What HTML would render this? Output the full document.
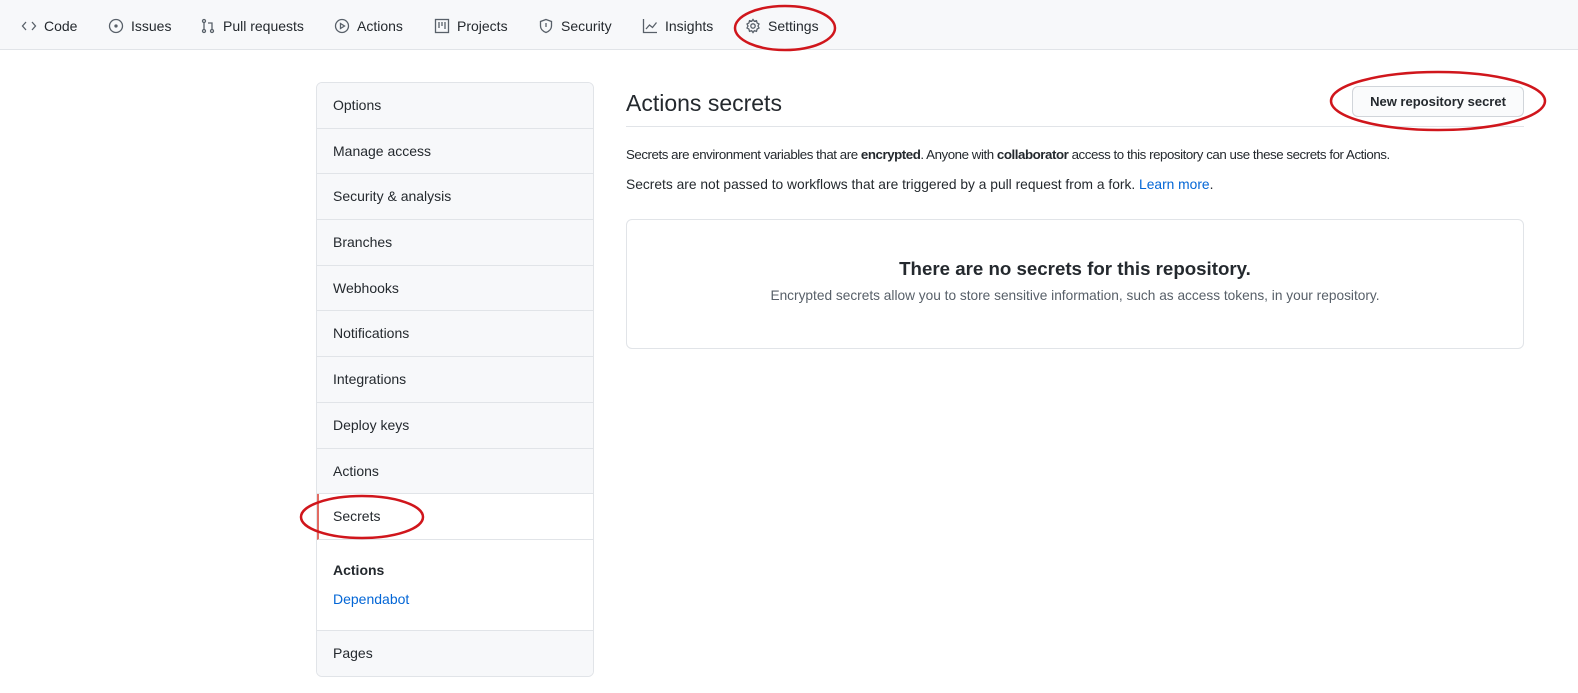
<!DOCTYPE html>
<html><head><meta charset="utf-8"><style>
*{box-sizing:border-box;margin:0;padding:0}
body{width:1578px;height:693px;background:#fff;font-family:"Liberation Sans",sans-serif;color:#24292e;position:relative;overflow:hidden;font-size:14px}
.nav{position:absolute;left:0;top:0;width:1578px;height:50px;background:#f7f8fa;border-bottom:1px solid #e1e4e8}
.nav span{position:absolute;top:18px;font-size:14px;color:#24292e;display:flex;align-items:center}
.nav svg{margin-right:7px}
.side{position:absolute;left:316px;top:82px;width:278px;height:595px;border:1px solid #e1e4e8;border-radius:6px;overflow:hidden;background:#fff}
.it{height:45.7px;line-height:45px;padding-left:16px;background:#f7f8fa;border-bottom:1px solid #e1e4e8;font-size:14px}
.it.sel{background:#fff;border-left:2px solid #e36b62;padding-left:14px}
.sub{height:91px;background:#fff;border-bottom:1px solid #e1e4e8;padding:22px 16px 0}
h2{position:absolute;left:626px;top:90px;font-size:23px;font-weight:normal}
.hr{position:absolute;left:626px;top:126px;width:898px;height:1px;background:#e1e4e8}
.btn{position:absolute;left:1352px;top:86px;width:172px;height:31px;border:1px solid #d1d5da;border-radius:6px;background:#fafbfc;font-size:13px;font-weight:bold;text-align:center;line-height:29px}
p{position:absolute;left:626px;font-size:13.4px}
.box{position:absolute;left:626px;top:219px;width:898px;height:130px;border:1px solid #e1e4e8;border-radius:6px;text-align:center}
</style></head><body>
<div class="nav">
<span style="left:21px"><svg width="16" height="16" viewBox="0 0 16 16" fill="none" stroke="#586069" stroke-width="1.3"><path d="M5 4L1.5 8 5 12M11 4l3.5 4-3.5 4"/></svg>Code</span>
<span style="left:108px"><svg width="16" height="16" viewBox="0 0 16 16" fill="none" stroke="#586069" stroke-width="1.3"><circle cx="8" cy="8" r="6.5"/><circle cx="8" cy="8" r="1" fill="#586069"/></svg>Issues</span>
<span style="left:200px"><svg width="16" height="16" viewBox="0 0 16 16" fill="none" stroke="#586069" stroke-width="1.3"><circle cx="4" cy="3" r="1.5"/><circle cx="4" cy="13" r="1.5"/><circle cx="12" cy="13" r="1.5"/><path d="M4 4.5v7M12 11.5V5H8"/></svg>Pull requests</span>
<span style="left:334px"><svg width="16" height="16" viewBox="0 0 16 16" fill="none" stroke="#586069" stroke-width="1.3"><circle cx="8" cy="8" r="6.5"/><path d="M6.5 5.5v5l4-2.5z"/></svg>Actions</span>
<span style="left:434px"><svg width="16" height="16" viewBox="0 0 16 16" fill="none" stroke="#586069" stroke-width="1.3"><rect x="1.5" y="1.5" width="13" height="13"/><path d="M5 4v6M8 4v4M11 4v7"/></svg>Projects</span>
<span style="left:538px"><svg width="16" height="16" viewBox="0 0 16 16" fill="none" stroke="#586069" stroke-width="1.3"><path d="M8 1.5l5.5 2v4.5c0 3.5-3 5.5-5.5 6.5C5.5 13.5 2.5 11.5 2.5 8V3.5z"/><path d="M8 5v4"/></svg>Security</span>
<span style="left:642px"><svg width="16" height="16" viewBox="0 0 16 16" fill="none" stroke="#586069" stroke-width="1.3"><path d="M1.5 1v13.5H15M4 11l3.5-4 3 2.5 4-5"/></svg>Insights</span>
<span style="left:745px"><svg width="16" height="16" viewBox="0 0 16 16" fill="none" stroke="#586069" stroke-width="1.3"><circle cx="8" cy="8" r="2.2"/><path d="M8 1.5l1.3 1.8 2.2-.6.6 2.2 1.9 1.1-1 2 1 2-1.9 1.1-.6 2.2-2.2-.6L8 14.5l-1.3-1.8-2.2.6-.6-2.2-1.9-1.1 1-2-1-2 1.9-1.1.6-2.2 2.2.6z"/></svg>Settings</span>
</div>
<div class="side">
<div class="it">Options</div><div class="it">Manage access</div><div class="it">Security &amp; analysis</div><div class="it">Branches</div><div class="it">Webhooks</div><div class="it">Notifications</div><div class="it">Integrations</div><div class="it">Deploy keys</div><div class="it">Actions</div>
<div class="it sel">Secrets</div>
<div class="sub"><div style="font-weight:bold;margin-bottom:13px">Actions</div><div style="color:#0366d6">Dependabot</div></div>
<div class="it" style="border-bottom:none">Pages</div>
</div>
<h2>Actions secrets</h2>
<div class="hr"></div>
<div class="btn">New repository secret</div>
<p style="top:147px;font-size:13.3px;letter-spacing:-0.45px">Secrets are environment variables that are <b>encrypted</b>. Anyone with <b>collaborator</b> access to this repository can use these secrets for Actions.</p>
<p style="top:177px;font-size:13.8px">Secrets are not passed to workflows that are triggered by a pull request from a fork. <span style="color:#0366d6">Learn more</span>.</p>
<div class="box"><div style="font-size:18.7px;font-weight:bold;margin-top:38px">There are no secrets for this repository.</div><div style="font-size:13.7px;color:#586069;margin-top:8px">Encrypted secrets allow you to store sensitive information, such as access tokens, in your repository.</div></div>
<svg style="position:absolute;left:0;top:0" width="1578" height="693"><g fill="none" stroke="#d0161c" stroke-width="2.5"><ellipse cx="785" cy="28" rx="50" ry="22"/><ellipse cx="1438" cy="101" rx="107" ry="29"/><ellipse cx="362" cy="517" rx="61" ry="21"/></g></svg>
</body></html>
